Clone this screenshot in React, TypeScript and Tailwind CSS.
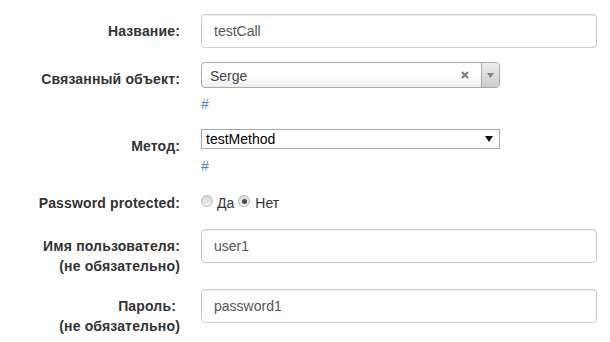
import type { ReactNode } from "react"

type RowProps = {
    label: ReactNode
    className: string
    children: ReactNode
}

const Row = ({ label, className, children }: RowProps) => {
    return (
        <div className={"flex " + className}>
            <label className="w-[180px] shrink-0 pt-[7px] text-right font-bold leading-5 tracking-[0.15px] text-[#333]">{label}</label>
            <div className="ml-[21px] w-[396px]">{children}</div>
        </div>
    )
}

const TextInput = ({ value }: { value: string }) => {
    return (
        <div className="flex h-[34px] w-full items-center rounded-[4px] border border-[#ccc] bg-white px-[12px] text-[#555] shadow-[inset_0_1px_1px_rgba(0,0,0,0.075)]">
            {value}
        </div>
    )
}

const Radio = ({ checked }: { checked?: boolean }) => {
    return (
        <span className="mt-[2px] flex h-[12px] w-[12px] shrink-0 items-center justify-center rounded-full border border-[#b8b8b8] bg-linear-to-b from-[#d6d6d6] to-[#f2f2f2]">
            {checked && <span className="h-[5px] w-[5px] rounded-full bg-[#4a4a4a]" />}
        </span>
    )
}

export default function App() {
    return (
        <div className="h-[342px] w-[610px] overflow-hidden bg-white pt-[14px] font-['Liberation_Sans',Arial,sans-serif] text-[14px] leading-5 text-[#333]">
            <Row label="Название:" className="mb-[14px]">
                <TextInput value="testCall" />
            </Row>

            <Row label="Связанный объект:" className="mb-[15px]">
                <div className="flex h-[26px] w-[299px] items-center rounded-[4px] border border-[#aaa] bg-linear-to-t from-[#eee] via-white via-50% to-white">
                    <span className="pl-[8px] pt-[1px] text-[#444]">Serge</span>
                    <svg className="ml-auto mr-[12px]" width="8" height="8" viewBox="0 0 8 8">
                        <path d="M1 1L7 7M7 1L1 7" stroke="#7a7a7a" strokeWidth="2" />
                    </svg>
                    <span className="flex h-full w-[18px] items-center justify-center rounded-r-[4px] border-l border-[#aaa] bg-linear-to-t from-[#ccc] to-[#eee]">
                        <svg width="7" height="5" viewBox="0 0 7 5">
                            <path d="M0 0H7L3.5 5Z" fill="#888" />
                        </svg>
                    </span>
                </div>
                <a className="mt-[6px] block leading-5 text-[#428bca]">#</a>
            </Row>

            <Row label="Метод:" className="mb-[10px]">
                <div className="flex h-[20px] w-[299px] items-center border border-[#a9a9a9] bg-white pl-[4px] pr-[6px] text-black">
                    <span>testMethod</span>
                    <svg className="ml-auto" width="8" height="6" viewBox="0 0 8 6">
                        <path d="M0 0H8L4 6Z" fill="#111" />
                    </svg>
                </div>
                <a className="mt-[7px] block leading-5 text-[#428bca]">#</a>
            </Row>

            <Row label="Password protected:" className="mb-[16px]">
                <div className="flex items-start pt-[7px] leading-5 text-[#333]">
                    <Radio />
                    <span className="ml-[4px]">Да</span>
                    <span className="ml-[4px] flex"><Radio checked /></span>
                    <span className="ml-[5px]">Нет</span>
                </div>
            </Row>

            <Row
                label={<>Имя пользователя:<br />(не обязательно)</>}
                className="mb-[13px]"
            >
                <TextInput value="user1" />
            </Row>

            <Row
                label={<>Пароль:&nbsp;<br />(не обязательно)</>}
                className="mb-[15px]"
            >
                <TextInput value="password1" />
            </Row>
        </div>
    )
}
